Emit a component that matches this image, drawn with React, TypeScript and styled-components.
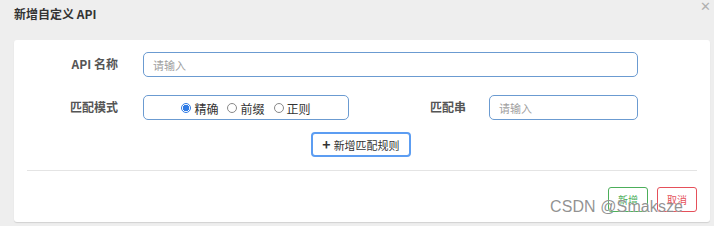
import React from 'react';
import styled, {createGlobalStyle} from 'styled-components';

const GlobalStyle = createGlobalStyle`
  html, body { margin: 0; padding: 0; background: #eeeeee; }
  body { font-family: "Noto Sans CJK SC", "Noto Sans", "Liberation Sans", sans-serif; }
  * { box-sizing: border-box; }
`;

const Dialog = styled.div`
  position: relative;
  width: 714px;
  height: 226px;
  background: #eeeeee;
  padding: 0 4px 4px 14px;
`;

const Header = styled.div`
  height: 40px;
  display: flex;
  align-items: flex-start;
  padding-top: 5px;
`;

const Title = styled.h1`
  margin: 0;
  font-size: 12px;
  font-weight: 700;
  color: #333;
  line-height: 18px;
`;

const Close = styled.span`
  position: absolute;
  top: 0;
  right: 3px;
  font-family: "DejaVu Sans", sans-serif;
  font-size: 13px;
  line-height: 14px;
  color: #b0b0b0;
`;

const Card = styled.div`
  width: 696px;
  height: 182px;
  background: #fff;
  border-radius: 3px;
  box-shadow: 0 1px 1px rgba(0, 0, 0, 0.12);
  padding: 12px 13px 0;
`;

const Row = styled.div<{$gap?: number}>`
  display: flex;
  align-items: center;
  height: 25px;
  margin-bottom: ${p => p.$gap ?? 18}px;
`;

const Label = styled.label<{$w: number; $pad: number}>`
  width: ${p => p.$w}px;
  text-align: right;
  font-size: 12px;
  font-weight: 700;
  color: #555;
  padding-right: ${p => p.$pad}px;
  margin-top: -3px;
`;

const Input = styled.div<{$w: number}>`
  width: ${p => p.$w}px;
  height: 25px;
  border: 1px solid #6b9bd1;
  border-radius: 5px;
  font-size: 11px;
  color: #a0a0a0;
  padding: 0 9px;
  display: flex;
  align-items: center;
`;

const RadioBox = styled.div`
  width: 206px;
  height: 25px;
  border: 1px solid #6b9bd1;
  border-radius: 5px;
  display: flex;
  align-items: center;
  justify-content: center;
  gap: 9px;
  font-size: 12px;
  color: #333;
  padding-top: 1px;
`;

const Radio = styled.span`
  display: flex;
  align-items: center;
  gap: 3px;
`;

const Dot = styled.span<{$on?: boolean}>`
  width: 10px;
  height: 10px;
  border-radius: 50%;
  border: 1px solid ${p => (p.$on ? '#2f7be5' : '#888')};
  background: ${p => (p.$on ? 'radial-gradient(circle, #2f7be5 0 3px, #fff 3.5px)' : '#fff')};
`;

const Center = styled.div`
  display: flex;
  justify-content: center;
  margin-bottom: 13px;
  padding-right: 2px;
`;

const AddButton = styled.button`
  width: 100px;
  height: 25px;
  background: #fff;
  border: 2px solid #5c9df2;
  border-radius: 4px;
  font-family: inherit;
  font-size: 11px;
  color: #333;
  display: flex;
  align-items: center;
  justify-content: center;
  gap: 3px;
  padding: 0;
`;

const Plus = styled.b`
  font-size: 14px;
  line-height: 1;
  margin-top: -2px;
`;

const Divider = styled.hr`
  margin: 0;
  border: 0;
  border-top: 1px solid #e4e4e4;
`;

const Footer = styled.div`
  display: flex;
  justify-content: flex-end;
  gap: 9px;
  margin-top: 16px;
`;

const Action = styled.button<{$c: string}>`
  width: 40px;
  height: 25px;
  background: #fff;
  border: 1px solid ${p => p.$c};
  border-radius: 3px;
  color: ${p => p.$c};
  font-family: inherit;
  font-size: 10px;
  padding: 0;
`;

const Watermark = styled.div`
  position: absolute;
  left: 550px;
  top: 198px;
  font-family: "Liberation Sans", sans-serif;
  font-size: 16px;
  color: rgba(110, 110, 110, 0.75);
  text-shadow: 0 0 1px #fff;
  letter-spacing: 0.1px;
`;

export default function App() {
  return (
    <Dialog>
      <GlobalStyle />
      <Header>
        <Title>新增自定义 API</Title>
        <Close>✕</Close>
      </Header>
      <Card>
        <Row>
          <Label $w={91} $pad={0}>API 名称</Label>
          <Input $w={495} style={{marginLeft: 25}}>请输入</Input>
        </Row>
        <Row $gap={12}>
          <Label $w={91} $pad={0}>匹配模式</Label>
          <RadioBox style={{marginLeft: 25}}>
            <Radio><Dot $on />精确</Radio>
            <Radio><Dot />前缀</Radio>
            <Radio><Dot />正则</Radio>
          </RadioBox>
          <Label $w={140} $pad={23}>匹配串</Label>
          <Input $w={149}>请输入</Input>
        </Row>
        <Center>
          <AddButton><Plus>+</Plus>新增匹配规则</AddButton>
        </Center>
        <Divider />
        <Footer>
          <Action $c="#4cae5a">新增</Action>
          <Action $c="#e5505a">取消</Action>
        </Footer>
      </Card>
      <Watermark>CSDN @Smaksze</Watermark>
    </Dialog>
  );
}
